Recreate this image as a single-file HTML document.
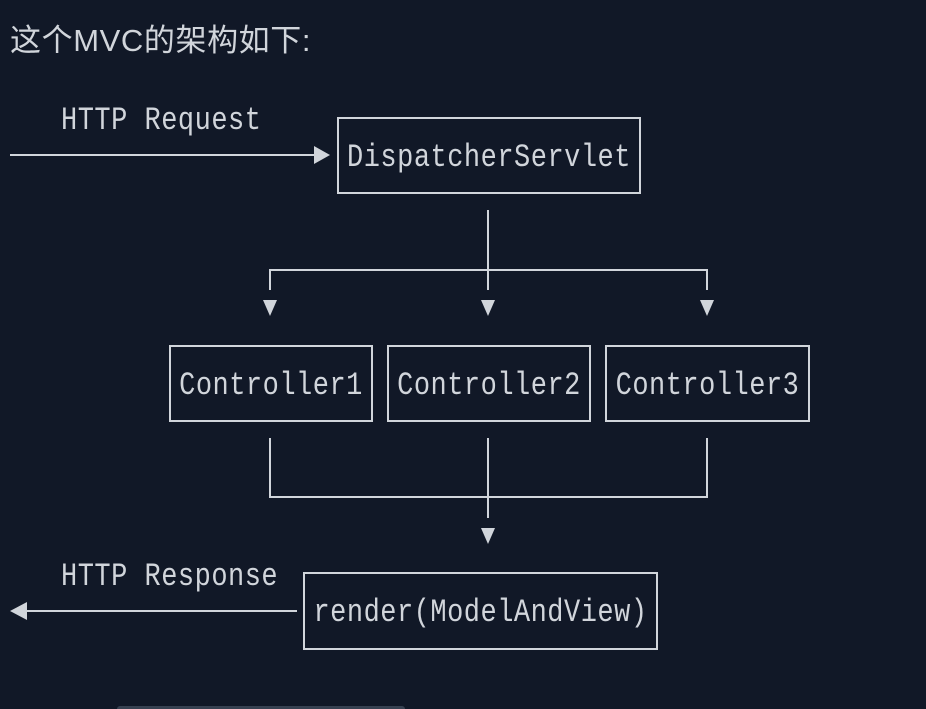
<!DOCTYPE html>
<html><head><meta charset="utf-8"><style>
html,body{margin:0;padding:0;background:#111827;width:926px;height:709px;overflow:hidden;position:relative;}
.t{position:absolute;color:#d1d5db;font-family:"Liberation Mono",monospace;font-size:27px;line-height:30px;white-space:nowrap;letter-spacing:0.5px;}
.t span,.box span{display:inline-block;transform:scaleY(1.2);}
.box{position:absolute;border:2px solid #d1d5db;box-sizing:border-box;color:#d1d5db;font-family:"Liberation Mono",monospace;font-size:27px;display:flex;align-items:center;justify-content:center;white-space:nowrap;letter-spacing:0.5px;padding-top:6px;}
h1{position:absolute;left:10px;top:21px;margin:0;font-weight:normal;font-size:31px;line-height:40px;color:#d1d5db;font-family:"Liberation Sans","Noto Sans CJK SC",sans-serif;letter-spacing:0.6px;}
</style></head><body>
<h1>这个MVC的架构如下:</h1>
<div class="t" style="left:61px;top:107px"><span>HTTP Request</span></div>
<div class="t" style="left:61px;top:563px"><span>HTTP Response</span></div>
<div class="box" style="left:337px;top:117px;width:304px;height:77px"><span>DispatcherServlet</span></div>
<div class="box" style="left:169px;top:345px;width:204px;height:77px"><span>Controller1</span></div>
<div class="box" style="left:387px;top:345px;width:204px;height:77px"><span>Controller2</span></div>
<div class="box" style="left:605px;top:345px;width:205px;height:77px"><span>Controller3</span></div>
<div class="box" style="left:303px;top:572px;width:355px;height:78px"><span>render(ModelAndView)</span></div>
<svg width="926" height="709" style="position:absolute;left:0;top:0" fill="#d1d5db" stroke="#d1d5db">
<g stroke-width="2" fill="none">
<line x1="10" y1="155" x2="316" y2="155"/>
<line x1="488" y1="210" x2="488" y2="290"/>
<polyline points="270,290 270,270 707,270 707,290"/>
<polyline points="270,438 270,497 707,497 707,438"/>
<line x1="488" y1="438" x2="488" y2="518"/>
<line x1="26" y1="611" x2="297" y2="611"/>
</g>
<g stroke="none">
<polygon points="314,146 330,155 314,164"/>
<polygon points="263,300 277,300 270,316"/>
<polygon points="481,300 495,300 488,316"/>
<polygon points="700,300 714,300 707,316"/>
<polygon points="481,528 495,528 488,544"/>
<polygon points="10,611 27,602 27,620"/>
</g>
<rect x="117" y="706" width="288" height="6" rx="3" fill="#374151" stroke="none"/>
</svg>
</body></html>
